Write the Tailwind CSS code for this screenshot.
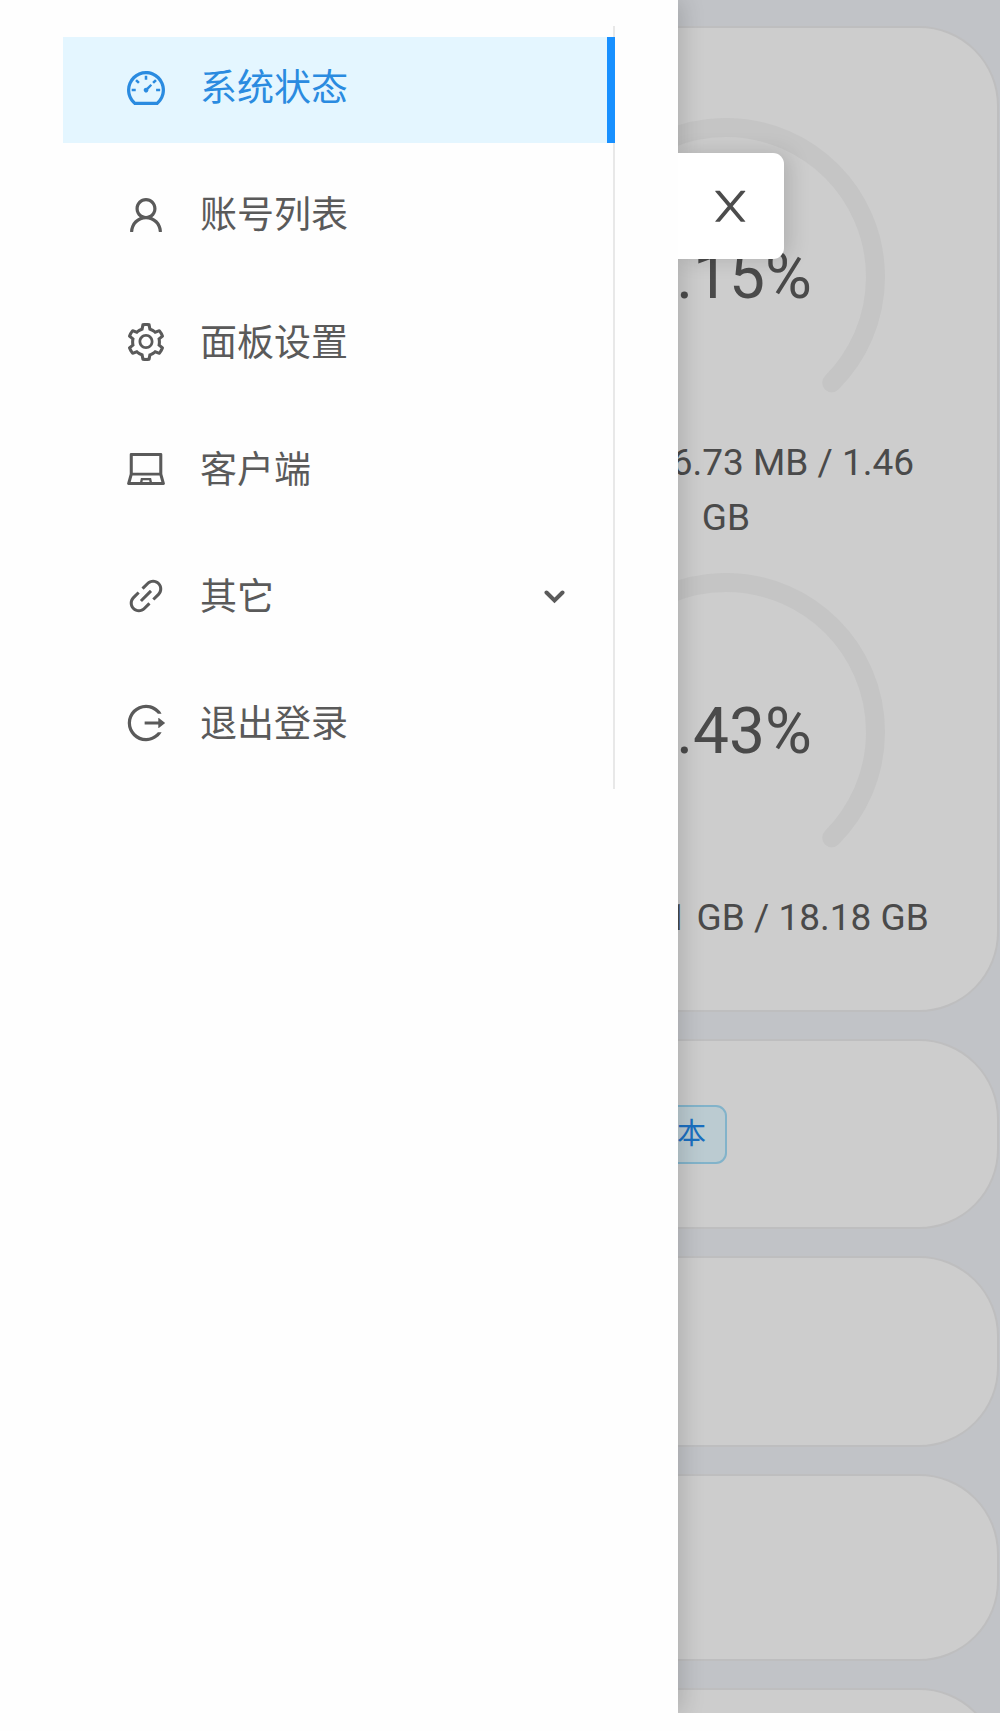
<!DOCTYPE html>
<html lang="zh-CN">
<head>
    <meta charset="UTF-8">
    <meta name="viewport" content="width=device-width, initial-scale=1.0">
    <title>系统状态</title>
    <script src="https://cdn.jsdelivr.net/npm/@tailwindcss/browser@4"></script>
    <style>
        body { font-family: Roboto, 'Noto Sans CJK SC', sans-serif; }
    </style>
</head>
<body class="bg-[#fefefe]">
    <div class="relative h-[1713px] w-[1000px] overflow-hidden">

        <!-- Dimmed status page -->
        <main class="flex h-[1713px] flex-col gap-[27px] overflow-hidden bg-[#c1c3c7] pt-[26px] pr-[1px] pl-[3px] text-[37px] leading-[55px] text-[#4a4a4a]">
            <section class="h-[986px] shrink-0 rounded-[80px] border-2 border-[#bebebf] bg-[#cdcdcd] pt-[90px] pr-[45px] pl-[43px]">
                <div class="grid grid-cols-2">
                    <div class="col-start-2 flex flex-col items-center">
                        <div class="grid place-items-center">
                            <svg class="col-start-1 row-start-1 h-[318px] w-[318px]" viewBox="0 0 318 318" fill="none" stroke-width="19" stroke-linecap="round">
                                <path d="M53.3 264.7A149.5 149.5 0 1 1 264.7 264.7" stroke="#c5c5c5"/>
                            </svg>
                            <span class="col-start-1 row-start-1 text-[64px] leading-[64px]">9.15%</span>
                        </div>
                        <p class="-mt-[1px] text-center">内存: 136.73 MB / 1.46<br>GB</p>
                    </div>
                    <div class="col-start-2 mt-[28px] flex flex-col items-center">
                        <div class="grid place-items-center">
                            <svg class="col-start-1 row-start-1 h-[318px] w-[318px]" viewBox="0 0 318 318" fill="none" stroke-width="19" stroke-linecap="round">
                                <path d="M53.3 264.7A149.5 149.5 0 1 1 264.7 264.7" stroke="#c5c5c5"/>
                            </svg>
                            <span class="col-start-1 row-start-1 text-[64px] leading-[64px]">9.43%</span>
                        </div>
                        <p class="-mt-[1px] text-center">硬盘: 1.71 GB / 18.18 GB</p>
                    </div>
                </div>
            </section>
            <section class="flex h-[190px] shrink-0 items-center rounded-[80px] border-2 border-[#bebebf] bg-[#cdcdcd] pl-[554px]">
                <span class="flex h-[59px] w-[168px] items-center justify-end rounded-[11px] border-2 border-[#82b3ca] bg-[#bbcbd1] pr-[19px] text-[29px] text-[#1a6fc0]">切换版本</span>
            </section>
            <section class="h-[191px] shrink-0 rounded-[80px] border-2 border-[#bebebf] bg-[#cdcdcd]"></section>
            <section class="h-[187px] shrink-0 rounded-[80px] border-2 border-[#bebebf] bg-[#cdcdcd]"></section>
            <section class="h-[190px] shrink-0 rounded-[80px] border-2 border-[#bebebf] bg-[#cdcdcd]"></section>
        </main>

        <!-- Drawer -->
        <div class="absolute top-0 left-0 h-[1713px] w-[678px] shadow-[5px_0_21px_rgba(0,0,0,0.15)]"></div>
        <button class="absolute top-[153px] left-[678px] flex h-[106px] w-[106px] items-center justify-center rounded-r-[11px] bg-white pr-[2px] text-[#4c4c4c] shadow-[5px_0_21px_rgba(0,0,0,0.15)]">
            <svg class="h-[42.6px] w-[42.6px]" viewBox="64 64 896 896" fill="currentColor"><path d="M563.8 512l262.5-312.9c4.4-5.2.7-13.1-6.1-13.1h-79.8c-4.7 0-9.2 2.1-12.3 5.7L511.6 449.8 295.1 191.7c-3-3.6-7.5-5.7-12.3-5.7H203c-6.8 0-10.5 7.9-6.1 13.1L459.4 512 196.9 824.9A7.95 7.95 0 00203 838h79.8c4.7 0 9.2-2.1 12.3-5.7l216.5-258.1 216.5 258.1c3 3.6 7.5 5.7 12.3 5.7h79.8c6.8 0 10.5-7.9 6.1-13.1L563.8 512z"/></svg>
        </button>
        <aside class="absolute top-0 left-0 h-[1713px] w-[678px] bg-[#fefefe] pt-[26px] pl-[63px]">
            <nav class="flex h-[763px] w-[552px] flex-col gap-[21.3px] border-r-2 border-[#e8e8e8] pt-[10.5px] text-[37px] leading-[56px] text-[#5a5a5a]">
                <a class="-mr-[2px] flex h-[106px] shrink-0 items-center border-r-8 border-[#1890ff] bg-[#e4f6ff] pb-[1px] pl-[64px] text-[#2a8be0]">
                    <svg class="mr-[35px] mb-[3px] h-[38px] w-[38px]" viewBox="64 64 896 896" fill="currentColor"><path d="M924.8 385.6a446.7 446.7 0 00-96-142.4 446.7 446.7 0 00-142.4-96C631.1 123.8 572.5 112 512 112s-119.1 11.8-174.4 35.2a446.7 446.7 0 00-142.4 96 446.7 446.7 0 00-96 142.4C75.8 440.9 64 499.5 64 560c0 132.7 58.3 257.7 159.9 343.1l1.7 1.4c5.8 4.8 13.1 7.5 20.6 7.5h531.7c7.5 0 14.8-2.7 20.6-7.5l1.7-1.4C901.7 817.7 960 692.7 960 560c0-60.5-11.9-119.1-35.2-174.4zM761.4 836H262.6A371.12 371.12 0 01140 560c0-99.4 38.7-192.8 109-263 70.3-70.3 163.7-109 263-109 99.4 0 192.8 38.7 263 109 70.3 70.3 109 163.7 109 263 0 105.6-44.5 205.5-122.6 276zM623.5 421.5a8.03 8.03 0 00-11.3 0L527.7 506c-18.7-5-39.4-.2-54.1 14.5a55.95 55.95 0 000 79.2 55.95 55.95 0 0079.2 0 55.87 55.87 0 0014.5-54.1l84.5-84.5c3.1-3.1 3.1-8.2 0-11.3l-28.3-28.3zM490 320h44c4.4 0 8-3.6 8-8v-80c0-4.4-3.6-8-8-8h-44c-4.4 0-8 3.6-8 8v80c0 4.4 3.6 8 8 8zm260 218v44c0 4.4 3.6 8 8 8h80c4.4 0 8-3.6 8-8v-44c0-4.4-3.6-8-8-8h-80c-4.4 0-8 3.6-8 8zm12.7-197.2l-31.1-31.1a8.03 8.03 0 00-11.3 0l-56.6 56.6a8.03 8.03 0 000 11.3l31.1 31.1c3.1 3.1 8.2 3.1 11.3 0l56.6-56.6c3.1-3.1 3.1-8.2 0-11.3zm-458.6-31.1a8.03 8.03 0 00-11.3 0l-31.1 31.1a8.03 8.03 0 000 11.3l56.6 56.6c3.1 3.1 8.2 3.1 11.3 0l31.1-31.1c3.1-3.1 3.1-8.2 0-11.3l-56.6-56.6zM262 530h-80c-4.4 0-8 3.6-8 8v44c0 4.4 3.6 8 8 8h80c4.4 0 8-3.6 8-8v-44c0-4.4-3.6-8-8-8z"/></svg>
                    <span>系统状态</span>
                </a>
                <a class="flex h-[106px] shrink-0 items-center pb-[1px] pl-[64px]">
                    <svg class="mr-[35px] mb-[3px] h-[38px] w-[38px]" viewBox="64 64 896 896" fill="currentColor"><path d="M858.5 763.6a374 374 0 00-80.6-119.5 375.63 375.63 0 00-119.5-80.6c-.4-.2-.8-.3-1.2-.5C719.5 518 760 444.7 760 362c0-137-111-248-248-248S264 225 264 362c0 82.7 40.5 156 102.8 201.1-.4.2-.8.3-1.2.5-44.8 18.9-85 46-119.5 80.6a375.63 375.63 0 00-80.6 119.5A371.7 371.7 0 00136 901.8a8 8 0 008 8.2h60c4.4 0 7.9-3.5 8-7.8 2-77.2 33-149.5 87.8-204.3 56.7-56.7 132-87.9 212.2-87.9s155.5 31.2 212.2 87.9C779 752.7 810 825 812 902.2c.1 4.4 3.6 7.8 8 7.8h60a8 8 0 008-8.2c-1-47.8-10.9-94.3-29.5-138.2zM512 534c-45.9 0-89.1-17.9-121.6-50.4S340 407.9 340 362c0-45.9 17.9-89.1 50.4-121.6S466.1 190 512 190s89.1 17.9 121.6 50.4S684 316.1 684 362c0 45.9-17.9 89.1-50.4 121.6S557.9 534 512 534z"/></svg>
                    <span>账号列表</span>
                </a>
                <a class="flex h-[106px] shrink-0 items-center pb-[1px] pl-[64px]">
                    <svg class="mr-[35px] mb-[4px] h-[38px] w-[38px]" viewBox="64 64 896 896" fill="currentColor"><path d="M924.8 625.7l-65.5-56c3.1-19 4.7-38.4 4.7-57.8s-1.6-38.8-4.7-57.8l65.5-56a32.03 32.03 0 009.3-35.2l-.9-2.6a443.74 443.74 0 00-79.7-137.9l-1.8-2.1a32.12 32.12 0 00-35.1-9.5l-81.3 28.9c-30-24.6-63.5-44-99.7-57.6l-15.7-85a32.05 32.05 0 00-25.8-25.7l-2.7-.5c-52.1-9.4-106.9-9.4-159 0l-2.7.5a32.05 32.05 0 00-25.8 25.7l-15.8 85.4a351.86 351.86 0 00-99 57.4l-81.9-29.1a32 32 0 00-35.1 9.5l-1.8 2.1a446.02 446.02 0 00-79.7 137.9l-.9 2.6c-4.5 12.5-.8 26.5 9.3 35.2l66.3 56.6c-3.1 18.8-4.6 38-4.6 57.1 0 19.2 1.5 38.4 4.6 57.1L99 625.5a32.03 32.03 0 00-9.3 35.2l.9 2.6c18.1 50.4 44.9 96.9 79.7 137.9l1.8 2.1a32.12 32.12 0 0035.1 9.5l81.9-29.1c29.8 24.5 63.1 43.9 99 57.4l15.8 85.4a32.05 32.05 0 0025.8 25.7l2.7.5a449.4 449.4 0 00159 0l2.7-.5a32.05 32.05 0 0025.8-25.7l15.7-85a350 350 0 0099.7-57.6l81.3 28.9a32 32 0 0035.1-9.5l1.8-2.1c34.8-41.1 61.6-87.5 79.7-137.9l.9-2.6c4.5-12.3.8-26.3-9.3-35zM788.3 465.9c2.5 15.1 3.8 30.6 3.8 46.1s-1.3 31-3.8 46.1l-6.6 40.1 74.7 63.9a370.03 370.03 0 01-42.6 73.6L721 702.8l-31.4 25.8c-23.9 19.6-50.5 35-79.3 45.8l-38.1 14.3-17.9 97a377.5 377.5 0 01-85 0l-17.9-97.2-37.8-14.5c-28.5-10.8-55-26.2-78.7-45.7l-31.4-25.9-93.4 33.2c-17-22.9-31.2-47.6-42.6-73.6l75.5-64.5-6.5-40c-2.4-14.9-3.7-30.3-3.7-45.5 0-15.3 1.2-30.6 3.7-45.5l6.5-40-75.5-64.5c11.3-26.1 25.6-50.7 42.6-73.6l93.4 33.2 31.4-25.9c23.7-19.5 50.2-34.9 78.7-45.7l37.9-14.3 17.9-97.2c28.1-3.2 56.8-3.2 85 0l17.9 97 38.1 14.3c28.7 10.8 55.4 26.2 79.3 45.8l31.4 25.8 92.8-32.9c17 22.9 31.2 47.6 42.6 73.6L781.8 426l6.5 39.9zM512 326c-97.2 0-176 78.8-176 176s78.8 176 176 176 176-78.8 176-176-78.8-176-176-176zm79.2 255.2A111.6 111.6 0 01512 614c-29.9 0-58-11.7-79.2-32.8A111.6 111.6 0 01400 502c0-29.9 11.7-58 32.8-79.2C454 401.6 482.1 390 512 390c29.9 0 58 11.6 79.2 32.8A111.6 111.6 0 01624 502c0 29.9-11.7 58-32.8 79.2z"/></svg>
                    <span>面板设置</span>
                </a>
                <a class="flex h-[106px] shrink-0 items-center pb-[1px] pl-[64px]">
                    <svg class="mr-[35px] mb-[4px] h-[38px] w-[38px]" viewBox="64 64 896 896" fill="currentColor"><path d="M956.9 845.1L896.4 632V168c0-17.7-14.3-32-32-32h-704c-17.7 0-32 14.3-32 32v464L67.9 845.1C60.4 866 75.8 888 98 888h828.8c22.2 0 37.6-22 30.1-42.9zM200.4 208h624v395h-624V208zm228.3 608l8.1-37h150.3l8.1 37H428.7zm224 0l-19.1-86.7c-.8-3.7-4.1-6.3-7.8-6.3H398.2c-3.8 0-7 2.6-7.8 6.3L371.3 816H151l42.3-149h638.2l42.3 149H652.7z"/></svg>
                    <span>客户端</span>
                </a>
                <a class="flex h-[106px] shrink-0 items-center pr-[48px] pb-[1px] pl-[64px]">
                    <svg class="mr-[35px] mb-[4px] h-[38px] w-[38px]" viewBox="64 64 896 896" fill="currentColor"><path d="M574 665.4a8.03 8.03 0 00-11.3 0L446.5 781.6c-53.8 53.8-144.6 59.5-204 0-59.5-59.5-53.8-150.2 0-204l116.2-116.2c3.1-3.1 3.1-8.2 0-11.3l-39.8-39.8a8.03 8.03 0 00-11.3 0L191.4 526.5c-84.6 84.6-84.6 221.5 0 306s221.5 84.6 306 0l116.2-116.2c3.1-3.1 3.1-8.2 0-11.3L574 665.4zm258.6-474c-84.6-84.6-221.5-84.6-306 0L410.3 307.6a8.03 8.03 0 000 11.3l39.7 39.7c3.1 3.1 8.2 3.1 11.3 0l116.2-116.2c53.8-53.8 144.6-59.5 204 0 59.5 59.5 53.8 150.2 0 204L665.3 562.6a8.03 8.03 0 000 11.3l39.8 39.8c3.1 3.1 8.2 3.1 11.3 0l116.2-116.2c84.5-84.6 84.5-221.5 0-306.1zM610.1 372.3a8.03 8.03 0 00-11.3 0L372.3 598.7a8.03 8.03 0 000 11.3l39.6 39.6c3.1 3.1 8.2 3.1 11.3 0l226.4-226.4c3.1-3.1 3.1-8.2 0-11.3l-39.5-39.6z"/></svg>
                    <span>其它</span>
                    <svg class="mb-[2px] ml-auto h-[14px] w-[21px]" viewBox="0 0 21 14" fill="none" stroke="currentColor" stroke-width="4" stroke-linecap="round"><path d="M2.5 2.5L10.5 10.5L18.5 2.5"/></svg>
                </a>
                <a class="flex h-[106px] shrink-0 items-center pb-[1px] pl-[64px]">
                    <svg class="mr-[35px] mb-[4px] h-[38px] w-[38px]" viewBox="64 64 896 896" fill="currentColor"><path d="M868 732h-70.3c-4.8 0-9.3 2.1-12.3 5.8-7 8.5-14.5 16.7-22.4 24.5a353.84 353.84 0 01-112.7 75.9A352.8 352.8 0 01512.4 866c-47.9 0-94.3-9.4-137.9-27.8a353.84 353.84 0 01-112.7-75.9 353.28 353.28 0 01-76-112.5C167.3 606.2 158 559.9 158 512s9.4-94.2 27.8-137.8c17.8-42.1 43.4-80 76-112.5s70.5-58.1 112.7-75.9c43.6-18.4 90-27.8 137.9-27.8 47.9 0 94.3 9.3 137.9 27.8 42.2 17.8 80.1 43.4 112.7 75.9 7.9 7.9 15.3 16.1 22.4 24.5 3 3.7 7.6 5.8 12.3 5.8H868c6.3 0 10.2-7 6.7-12.3C798 160.5 663.8 81.6 511.3 82 271.7 82.6 79.6 277.1 82 516.4 84.4 751.9 276.2 942 512.4 942c152.1 0 285.7-78.8 362.3-197.7 3.4-5.3-.4-12.3-6.7-12.3zm88.9-226.3L815 393.7c-5.3-4.2-13-.4-13 6.3v76H488c-4.4 0-8 3.6-8 8v56c0 4.4 3.6 8 8 8h314v76c0 6.7 7.8 10.5 13 6.3l141.9-112a8 8 0 000-12.6z"/></svg>
                    <span>退出登录</span>
                </a>
            </nav>
        </aside>
    </div>
</body>
</html>
